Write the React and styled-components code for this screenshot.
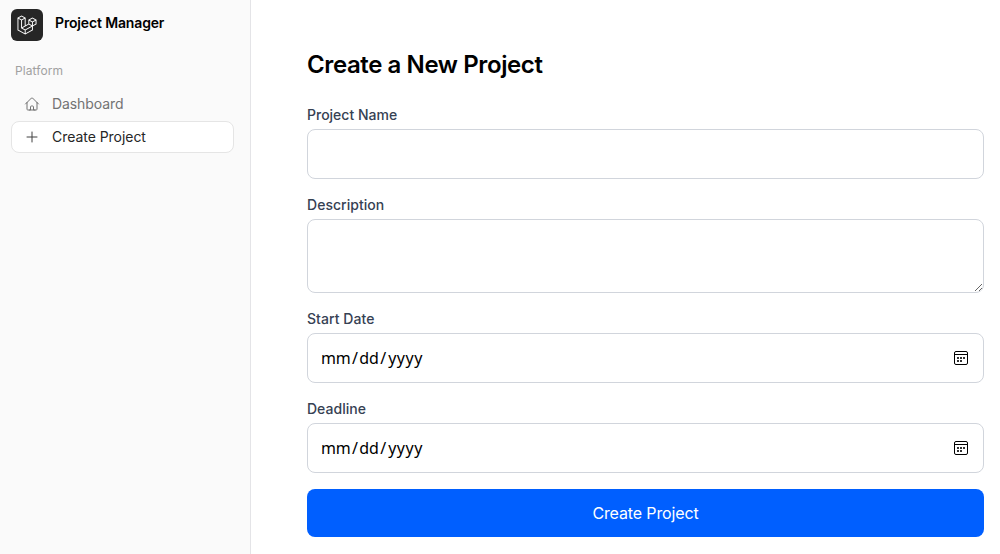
import React from "react";
import styled, { createGlobalStyle } from "styled-components";

const GlobalStyle = createGlobalStyle`
  *, *::before, *::after { box-sizing: border-box; }
  body { margin: 0; background: #fff; color: #000; font-family: Inter, "Liberation Sans", sans-serif; overflow: hidden; }
`;

const Page = styled.div`
  display: flex;
  height: 100vh;
`;

const Sidebar = styled.aside`
  width: 251px;
  flex: none;
  padding: 9px 16px 0 11px;
  background: #fafafa;
  border-right: 1px solid #e4e4e7;
`;

const Brand = styled.div`
  display: flex;
  align-items: center;
  gap: 12px;
  height: 32px;
`;

const LogoTile = styled.div`
  display: flex;
  align-items: center;
  justify-content: center;
  width: 32px;
  height: 32px;
  border-radius: 6px;
  background: #262626;
  color: #fff;
`;

const BrandName = styled.span`
  font-size: 14px;
  line-height: 20px;
  font-weight: 600;
  letter-spacing: -0.15px;
  padding-bottom: 4px;
`;

const GroupTitle = styled.div`
  margin-top: 22px;
  padding-left: 4px;
  font-size: 12px;
  line-height: 16px;
  letter-spacing: 0.08px;
  color: #a1a1a1;
`;

const Nav = styled.nav`
  display: flex;
  flex-direction: column;
  gap: 1px;
  margin-top: 9px;
`;

const NavItem = styled.a`
  display: flex;
  align-items: center;
  gap: 12px;
  height: 32px;
  padding: 0 12px;
  border: 1px solid ${(p) => (p.$active ? "#e5e5e5" : "transparent")};
  border-radius: 8px;
  background: ${(p) => (p.$active ? "#fff" : "transparent")};
  color: ${(p) => (p.$active ? "#262626" : "#737373")};
  font-size: 14px;
  line-height: 20px;
  letter-spacing: ${(p) => p.$tracking};

  svg { color: ${(p) => (p.$active ? "#404040" : "#737373")}; flex: none; }
`;

const Main = styled.main`
  flex: 1;
  padding: 49px 16px 0 56px;
`;

const Title = styled.h1`
  margin: 0 0 24px;
  font-size: 24px;
  line-height: 32px;
  font-weight: 600;
  letter-spacing: -0.4px;
`;

const Form = styled.form`
  display: flex;
  flex-direction: column;
  gap: 16px;
`;

const Field = styled.div`
  display: flex;
  flex-direction: column;
  gap: 4px;
`;

const Label = styled.label`
  font-size: 14px;
  line-height: 20px;
  font-weight: 500;
  letter-spacing: ${(p) => p.$tracking};
  color: #364153;
`;

const control = `
  width: 100%;
  margin: 0;
  border: 1px solid #d1d5dc;
  border-radius: 8px;
  background: #fff;
  font: inherit;
  outline: none;
`;

const Input = styled.input`
  ${control}
  height: 50px;
  padding: 12px;
`;

const TextArea = styled.textarea`
  ${control}
  display: block;
  height: 74px;
  padding: 12px;
  resize: vertical;
`;

const DateBox = styled.div`
  ${control}
  display: flex;
  align-items: center;
  justify-content: space-between;
  height: 50px;
  padding: 0 15px 0 13px;
`;

const DateText = styled.span`
  display: flex;
  gap: 1.7px;
  font-family: "Noto Sans", sans-serif;
  font-size: 16px;
  line-height: 24px;
  letter-spacing: -0.3px;
`;

const YearPart = styled.span`
  margin-left: 0.7px;
  letter-spacing: 0.5px;
`;

const Submit = styled.button`
  height: 48px;
  border: 0;
  border-radius: 8px;
  background: #005fff;
  color: #fff;
  font-family: inherit;
  font-size: 16px;
  line-height: 24px;
  letter-spacing: -0.13px;
`;

const Logo = () => (
  <svg width="20" height="20" viewBox="0 0 40 42" fill="currentColor">
    <path
      fillRule="evenodd"
      clipRule="evenodd"
      d="M17.2 5.633 8.6.855 0 5.633v26.51l16.2 9 16.2-9v-8.442l7.6-4.223V9.856l-8.6-4.777-8.6 4.777V18.3l-5.6 3.111V5.633ZM38 18.301l-5.6 3.11v-6.157l5.6-3.11V18.3Zm-1.06-7.856-5.54 3.078-5.54-3.079 5.54-3.078 5.54 3.079ZM24.8 18.3v-6.157l5.6 3.111v6.158L24.8 18.3Zm-1 1.732 5.54 3.078-13.14 7.302-5.54-3.078 13.14-7.3v-.002Zm-16.2 7.89 7.6 4.222V38.3L2 30.966V7.92l5.6 3.111v16.892ZM8.6 9.3 3.06 6.222 8.6 3.143l5.54 3.08L8.6 9.3Zm21.8 15.51-13.2 7.334V38.3l13.2-7.334v-6.156ZM9.6 11.034l5.6-3.11v14.6l-5.6 3.11v-14.6Z"
    />
  </svg>
);

const OutlineIcon = ({ d }) => (
  <svg width="16" height="16" viewBox="0 0 24 24" fill="none" stroke="currentColor" strokeWidth="1.5" strokeLinecap="round" strokeLinejoin="round">
    <path d={d} />
  </svg>
);

const HOME =
  "m2.25 12 8.954-8.955c.44-.439 1.152-.439 1.591 0L21.75 12M4.5 9.75v10.125c0 .621.504 1.125 1.125 1.125H9.75v-4.875c0-.621.504-1.125 1.125-1.125h2.25c.621 0 1.125.504 1.125 1.125V21h4.125c.621 0 1.125-.504 1.125-1.125V9.75M8.25 21h8.25";
const PLUS = "M12 4.5v15m7.5-7.5h-15";

const CalendarIcon = () => (
  <svg width="14" height="14" viewBox="0 0 14 14" fill="none">
    <rect x="0.5" y="0.5" width="13" height="13" rx="1.5" stroke="#000" />
    <path d="M1 3.5h12" stroke="#000" />
    <path d="M3 6h2v2H3zM6 6h2v2H6zM9 6h2v2H9zM3 9h2v2H3zM6 9h2v2H6z" fill="#333" />
  </svg>
);

const DateField = ({ label, tracking }) => (
  <Field>
    <Label $tracking={tracking}>{label}</Label>
    <DateBox>
      <DateText>
        <span>mm</span>
        <span>/</span>
        <span>dd</span>
        <span>/</span>
        <YearPart>yyyy</YearPart>
      </DateText>
      <CalendarIcon />
    </DateBox>
  </Field>
);

export default function App() {
  return (
    <>
      <GlobalStyle />
      <Page>
        <Sidebar>
          <Brand>
            <LogoTile>
              <Logo />
            </LogoTile>
            <BrandName>Project Manager</BrandName>
          </Brand>
          <GroupTitle>Platform</GroupTitle>
          <Nav>
            <NavItem $tracking="-0.08px">
              <OutlineIcon d={HOME} />
              Dashboard
            </NavItem>
            <NavItem $active $tracking="-0.04px">
              <OutlineIcon d={PLUS} />
              Create Project
            </NavItem>
          </Nav>
        </Sidebar>
        <Main>
          <Title>Create a New Project</Title>
          <Form>
            <Field>
              <Label htmlFor="name" $tracking="0">Project Name</Label>
              <Input id="name" />
            </Field>
            <Field>
              <Label htmlFor="description" $tracking="0.03px">Description</Label>
              <TextArea id="description" />
            </Field>
            <DateField label="Start Date" tracking="0.06px" />
            <DateField label="Deadline" tracking="0.02px" />
            <Submit type="button">Create Project</Submit>
          </Form>
        </Main>
      </Page>
    </>
  );
}
